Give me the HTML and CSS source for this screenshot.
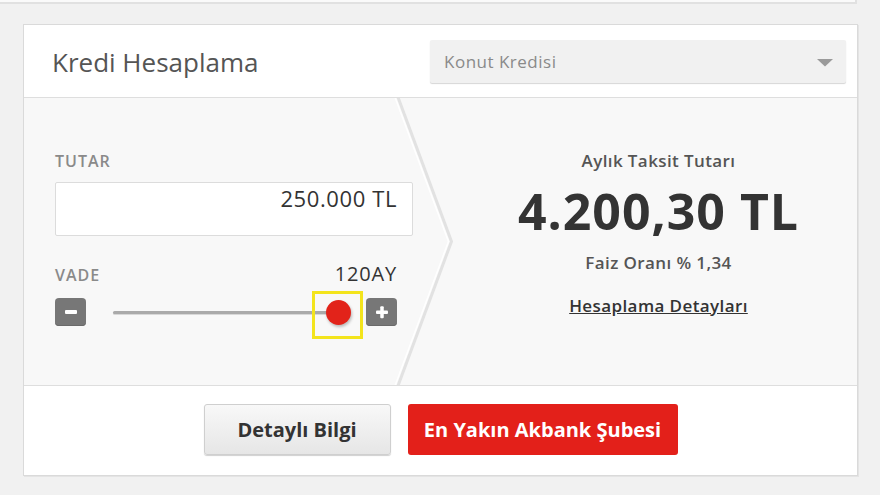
FILE: index.html
```html
<!DOCTYPE html>
<html lang="tr">
<head>
<meta charset="utf-8">
<title>Kredi Hesaplama</title>
<link rel="stylesheet" href="styles.css">
</head>
<body>
<div class="prev-card"></div>
<section class="card">
  <header class="card-head">
    <h1 class="title">Kredi Hesaplama</h1>
    <div class="select">
      <span class="select-text">Konut Kredisi</span>
      <svg class="caret" width="16" height="8" viewBox="0 0 16 8"><path d="M0 0H16L8 7.5Z" fill="#9a9a9a"/></svg>
    </div>
  </header>
  <div class="card-body">
    <svg class="divider" width="100%" height="288" viewBox="0 0 834 288" preserveAspectRatio="none">
      <polyline points="374,-2 428,144 374,290" fill="none" stroke="#e2e2e2" stroke-width="3"/>
      <polyline points="371,-2 425,144 371,290" fill="none" stroke="#ffffff" stroke-width="1.5"/>
    </svg>
    <div class="inputs">
      <div class="label">TUTAR</div>
      <div class="amount">250.000 TL</div>
      <div class="term-row">
        <span class="label">VADE</span>
        <span class="term">120AY</span>
      </div>
      <div class="slider-row">
        <button class="step" aria-label="azalt">
          <svg width="14" height="14" viewBox="0 0 14 14"><rect x="1" y="5" width="12" height="4" rx="1" fill="#fff"/></svg>
        </button>
        <div class="slider">
          <div class="track"></div>
          <div class="knob"><span class="focus"></span></div>
        </div>
        <button class="step" aria-label="artır">
          <svg width="14" height="14" viewBox="0 0 14 14"><rect x="1" y="5.5" width="12" height="3.5" rx="1" fill="#fff"/><rect x="5.25" y="1.25" width="3.5" height="12" rx="1" fill="#fff"/></svg>
        </button>
      </div>
    </div>
    <div class="result">
      <div class="result-label">Aylık Taksit Tutarı</div>
      <div class="result-value">4.200,30 TL</div>
      <div class="rate">Faiz Oranı % 1,34</div>
      <a class="details" href="#">Hesaplama Detayları</a>
    </div>
  </div>
  <footer class="card-foot">
    <button class="btn btn-light">Detaylı Bilgi</button>
    <button class="btn btn-red">En Yakın Akbank Şubesi</button>
  </footer>
</section>
</body>
</html>
```
FILE: styles.css
```css
* { box-sizing: border-box; }
html, body { margin: 0; padding: 0; }
body {
  background: #f1f1f1;
  font-family: "Open Sans", "Noto Sans", Arial, sans-serif;
  color: #333;
  width: 880px;
  height: 495px;
  overflow: hidden;
}
.prev-card {
  width: 857px;
  height: 4px;
  background: #fafafa;
  border-bottom: 2px solid #e1e1e1;
  border-right: 2px solid #e1e1e1;
}
.card {
  margin: 20px 0 0 23px;
  width: 835px;
  background: #fff;
  border: 1px solid #dadada;
  box-shadow: 1px 1px 0 #e4e4e4;
}
.card-head {
  height: 73px;
  display: flex;
  align-items: center;
  justify-content: space-between;
  padding: 0 11px 0 28px;
  border-bottom: 1px solid #dedede;
}
.title {
  margin: 0;
  font-size: 26px;
  font-weight: 400;
  color: #555;
  line-height: 30px;
  padding-top: 2px;
}
.select {
  width: 416px;
  height: 43px;
  background: #f1f1f1;
  border-radius: 2px;
  box-shadow: 0 1px 1px #d6d6d6;
  display: flex;
  align-items: center;
  justify-content: space-between;
  padding: 0 13px 0 14px;
}
.select-text {
  font-size: 17px;
  letter-spacing: 0.5px;
  color: #8a8a8a;
}
.caret { display: block; margin-top: 3px; }
.card-body {
  position: relative;
  height: 288px;
  background: #f8f8f8;
  display: flex;
  border-bottom: 1px solid #dedede;
}
.divider {
  position: absolute;
  left: 0;
  top: 0;
  width: 100%;
  height: 100%;
}
.inputs {
  position: relative;
  width: 436px;
  padding: 53px 47px 0 31px;
}
.label {
  font-size: 16px;
  line-height: 20px;
  font-weight: 600;
  letter-spacing: 1px;
  color: #8a8a8a;
}
.amount {
  margin-top: 11px;
  height: 54px;
  background: #fff;
  border: 1px solid #dcdcdc;
  border-radius: 2px;
  text-align: right;
  font-size: 22px;
  line-height: 27px;
  letter-spacing: 0.6px;
  padding: 2px 15px 0 0;
  color: #333;
}
.term-row {
  margin-top: 26px;
  display: flex;
  justify-content: space-between;
  align-items: baseline;
  height: 24px;
  padding-right: 16px;
}
.term {
  font-size: 20px;
  line-height: 24px;
  letter-spacing: 0.8px;
  color: #333;
}
.slider-row {
  margin-top: 12px;
  margin-right: 16px;
  display: flex;
  align-items: center;
  height: 28px;
}
.step {
  width: 31px;
  height: 28px;
  border: 0;
  padding: 0;
  margin: 0;
  background: #777;
  border-radius: 4px;
  display: flex;
  align-items: center;
  justify-content: center;
  box-shadow: inset 0 -1px 0 #6a6a6a;
}
.step svg { display: block; }
.slider {
  flex: 1;
  display: flex;
  align-items: center;
  margin: 0 15px 0 27px;
}
.track {
  flex: 1;
  height: 3px;
  background: #aaa;
  border-radius: 2px;
  box-shadow: 0 1px 0 #d8d8d8;
}
.knob {
  position: relative;
  width: 25px;
  height: 25px;
  margin-left: -12px;
  border-radius: 50%;
  background: #e2231a;
  box-shadow: 1px 2px 3px rgba(0,0,0,0.25);
}
.focus {
  position: absolute;
  left: -14px;
  top: -9px;
  width: 51px;
  height: 48px;
  border: 3px solid #f3e41c;
}
.result {
  position: relative;
  flex: 1;
  display: flex;
  flex-direction: column;
  align-items: center;
  padding-top: 53px;
}
.result-label {
  font-size: 17px;
  line-height: 20px;
  font-weight: 600;
  letter-spacing: 0.4px;
  color: #555;
}
.result-value {
  margin-top: 12px;
  font-size: 50px;
  line-height: 56px;
  font-weight: 700;
  color: #333;
  letter-spacing: 1px;
}
.rate {
  margin-top: 14px;
  font-size: 17px;
  line-height: 20px;
  font-weight: 600;
  letter-spacing: 0.4px;
  color: #555;
}
.details {
  margin-top: 23px;
  font-size: 17px;
  line-height: 20px;
  font-weight: 600;
  letter-spacing: 0.4px;
  color: #333;
  text-decoration: underline;
}
.card-foot {
  height: 89px;
  display: flex;
  justify-content: center;
  align-items: flex-start;
  gap: 17px;
  padding-top: 18px;
}
.btn {
  height: 51px;
  border-radius: 3px;
  font-family: "Open Sans", "Noto Sans", Arial, sans-serif;
  font-size: 20px;
  font-weight: 700;
  padding: 0;
  margin: 0;
}
.btn-light {
  width: 187px;
  color: #333;
  background: linear-gradient(#f8f8f8, #e6e6e6);
  border: 1px solid #cfcfcf;
  box-shadow: 0 1px 1px #d0d0d0;
}
.btn-red {
  width: 270px;
  color: #fff;
  background: #e3201a;
  border: 0;
}
```
